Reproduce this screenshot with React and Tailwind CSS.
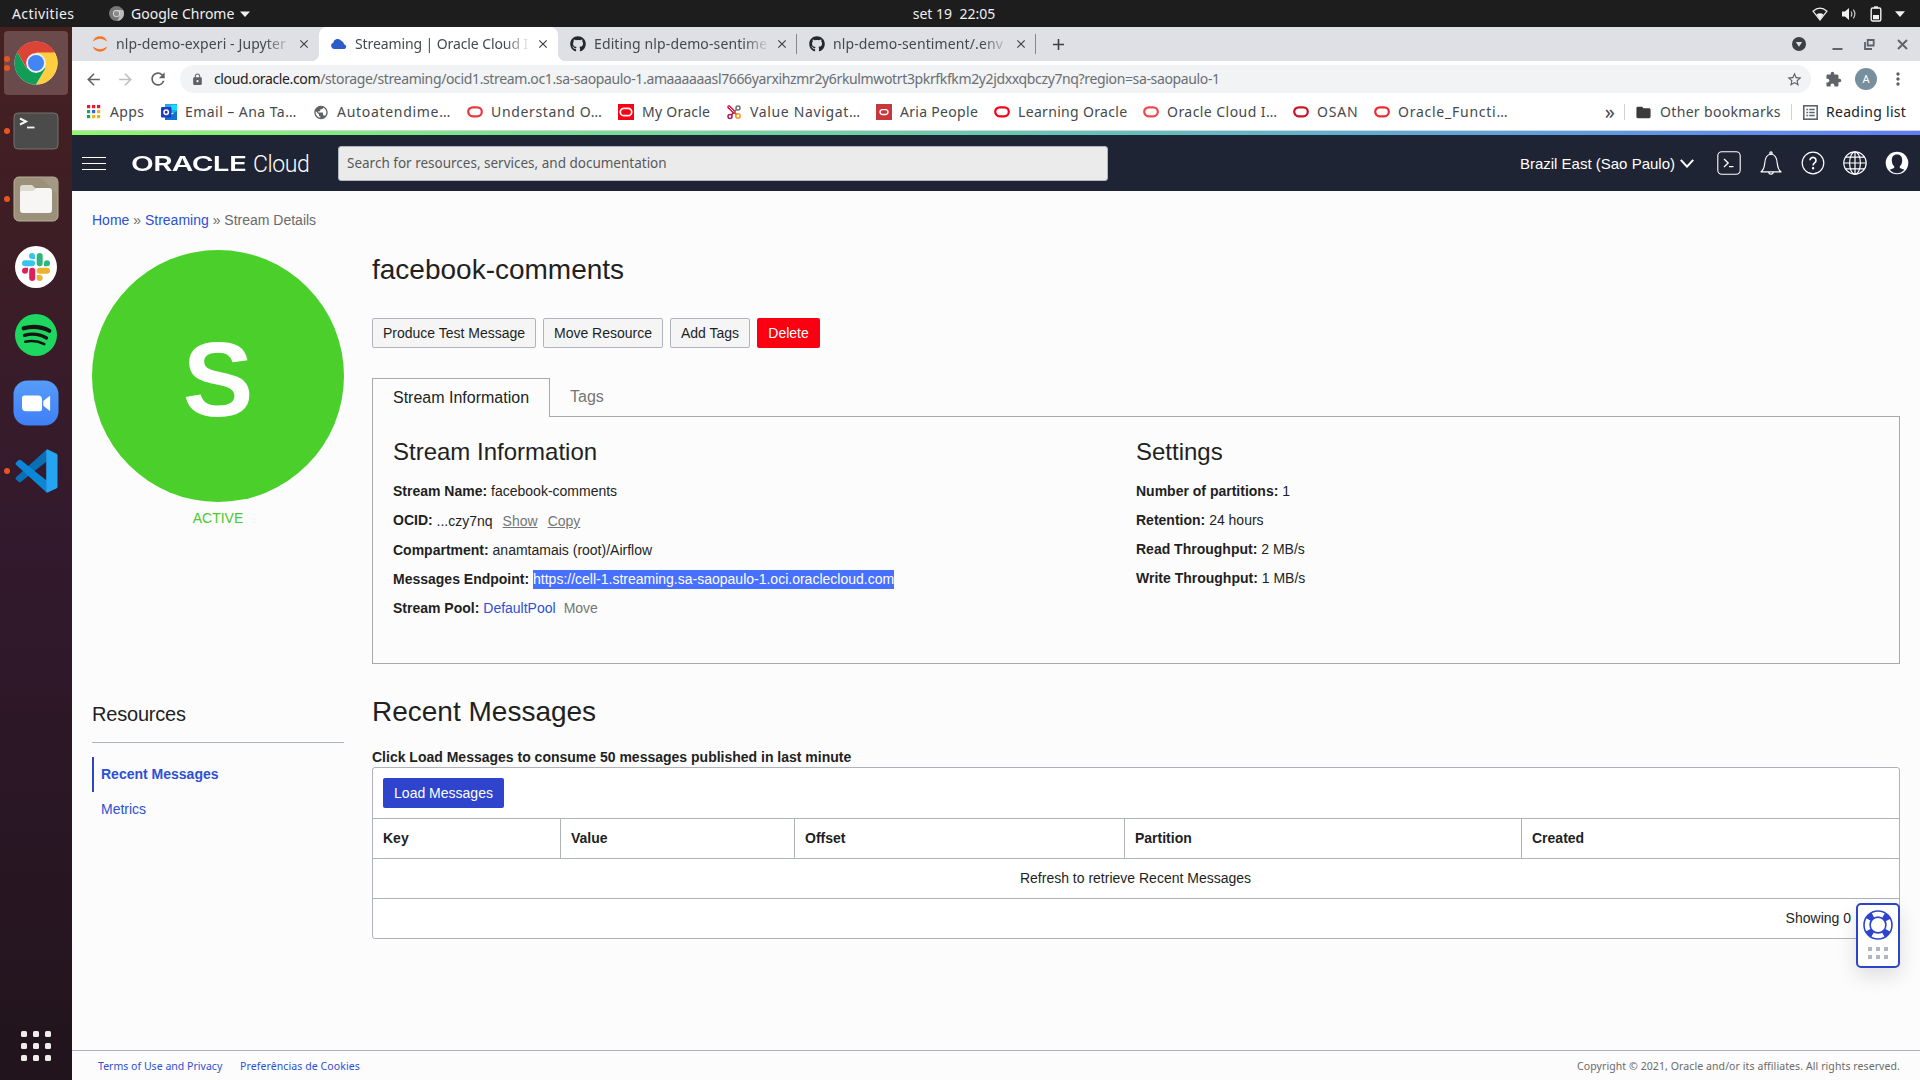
import React from "react";
import { FaGithub } from "react-icons/fa";
import {
  MdArrowBack, MdArrowForward, MdRefresh, MdLock, MdStarBorder, MdExtension,
  MdMoreVert, MdClose, MdAdd, MdPublic, MdFolder,
} from "react-icons/md";

const UI = "font-['Noto_Sans','Open_Sans',sans-serif]";

/* ---------- Dock ---------- */

function ChromeLogo() {
  return (
    <svg width="44" height="44" viewBox="0 0 48 48">
      <circle cx="24" cy="24" r="23.5" fill="#fff" />
      <path d="M24 24 L3.65 12.25 A23.5 23.5 0 0 1 44.35 12.25 Z" fill="#db4437" />
      <path d="M24 12.2 H44.3 A23.5 23.5 0 0 1 24 47.5 L34.2 29.9 Z" fill="#ffcd40" />
      <path d="M13.8 29.9 L3.65 12.25 A23.5 23.5 0 0 0 24 47.5 L34.2 29.9 L24 24 Z" fill="#0f9d58" />
      <path d="M24 12.2 H44.35 A23.5 23.5 0 0 0 3.65 12.25 L13.8 29.9 Z" fill="#db4437" />
      <circle cx="24" cy="24" r="10.8" fill="#f1f1f1" />
      <circle cx="24" cy="24" r="8.8" fill="#4285f4" />
    </svg>
  );
}

function TerminalLogo() {
  return (
    <svg width="46" height="38" viewBox="0 0 46 38">
      <rect x="1" y="1" width="44" height="36" rx="4" fill="#4b4b4b" stroke="#77736f" />
      <path d="M7 6.5 l6 3 l-6 3" fill="none" stroke="#f4f4f4" strokeWidth="2" />
      <path d="M14 15.5 h7.5" stroke="#f4f4f4" strokeWidth="1.8" />
    </svg>
  );
}

function FilesLogo() {
  return (
    <svg width="46" height="46" viewBox="0 0 46 46">
      <rect x="1" y="1" width="44" height="44" rx="5" fill="#9b9079" stroke="#b9b197" />
      <path d="M28 1 H41 a4 4 0 0 1 4 4 V20 Z" fill="#a49a84" />
      <path d="M7 12 a3 3 0 0 1 3-3 h9 l4 4 v7 H7z" fill="#dedbcf" />
      <path d="M7 17 q0-2 2-2 h11 l3-3 h13 a3 3 0 0 1 3 3 v19 a3 3 0 0 1-3 3 H10 a3 3 0 0 1-3-3z" fill="#f7f6f5" />
    </svg>
  );
}

function SlackLogo() {
  return (
    <svg width="42" height="42" viewBox="0 0 42 42">
      <circle cx="21" cy="21" r="21" fill="#fff" />
      <g fill="#36c5f0"><rect x="7" y="14.3" width="13" height="6" rx="3" /><path d="M20 13 h-3 a3 3 0 1 1 3-3z" /></g>
      <g fill="#2eb67d"><rect x="21.7" y="7" width="6" height="13.3" rx="3" /><path d="M29 20.3 v-3 a3 3 0 1 1 3 3z" /></g>
      <g fill="#ecb22e"><rect x="21.7" y="21.8" width="13.3" height="6" rx="3" /><path d="M21.7 29 h3 a3 3 0 1 1 -3 3z" /></g>
      <g fill="#e01e5a"><rect x="14.2" y="21.8" width="6" height="13.3" rx="3" /><path d="M13 21.8 v3 a3 3 0 1 1 -3-3z" /></g>
    </svg>
  );
}

function SpotifyLogo() {
  return (
    <svg width="42" height="42" viewBox="0 0 42 42">
      <circle cx="21" cy="21" r="21" fill="#1ed760" />
      <g fill="none" stroke="#191414" strokeLinecap="round">
        <path d="M8.7 14.3 Q22.5 10.5 34.3 16.8" strokeWidth="4.1" />
        <path d="M9.5 21.3 Q21.5 18 31.5 24" strokeWidth="3.3" />
        <path d="M10.3 27.8 Q20.5 25.3 29.3 30.2" strokeWidth="2.6" />
      </g>
    </svg>
  );
}

function ZoomLogo() {
  return (
    <svg width="46" height="46" viewBox="0 0 46 46">
      <defs>
        <linearGradient id="zoomBlue" x1="0" y1="0" x2="0" y2="1">
          <stop offset="0" stopColor="#569cf9" />
          <stop offset="1" stopColor="#3f7ff6" />
        </linearGradient>
      </defs>
      <rect x="0.5" y="0.5" width="45" height="45" rx="14" fill="url(#zoomBlue)" />
      <path d="M9 18 a2.5 2.5 0 0 1 2.5-2.5 H25 a4 4 0 0 1 4 4 V29 a2.3 2.3 0 0 1-2.3 2.3 H13 a4 4 0 0 1-4-4z" fill="#fff" />
      <path d="M30.3 21 l6-4.8 q.8-.5.8.5 v13.4 q0 1-.8.5 l-6-4.8z" fill="#fff" />
    </svg>
  );
}

function VsCodeLogo() {
  return (
    <svg width="43" height="44" viewBox="0 0 43 44">
      <path d="M31.6 0.6 L1 28.3 q-1 1 0 2.2 l2.8 2.4 q1 .8 2 0 L31.6 12.4z" fill="#0a6fb5" />
      <path d="M31.6 43.4 L1 15.700 q-1-1 0-2.200 l2.800-2.400 q1-.8 2 0 L31.6 31.6z" fill="#0c86d6" />
      <path d="M31.2 1 q.6-.8 1.600-.4 L41.600 4.800 q.9.500.9 1.500 V37.700 q0 1-.9 1.500 L32.800 43.400 q-1 .4-1.600-.4z" fill="#25a5f1" />
    </svg>
  );
}

const dockItems = [
  { name: "Chrome", Logo: ChromeLogo, dots: 2, active: true },
  { name: "Terminal", Logo: TerminalLogo, dots: 1 },
  { name: "Files", Logo: FilesLogo, dots: 1 },
  { name: "Slack", Logo: SlackLogo, dots: 0 },
  { name: "Spotify", Logo: SpotifyLogo, dots: 0 },
  { name: "Zoom", Logo: ZoomLogo, dots: 0 },
  { name: "VS Code", Logo: VsCodeLogo, dots: 1 },
];

function Dock() {
  return (
    <aside className="flex w-[72px] shrink-0 flex-col items-center justify-between bg-linear-to-b from-[#45201f] via-[#32192d] to-[#21141c] pt-1 pb-[19px]">
      <div className="flex flex-col gap-1">
        {dockItems.map(({ name, Logo, dots, active }) => (
          <div key={name} className={`relative flex h-16 w-16 items-center justify-center rounded ${active ? "bg-[#6a4a4a]" : ""}`}>
            <Logo />
            <div className="absolute inset-y-0 left-0 flex flex-col justify-center gap-[3px]">
              {Array.from({ length: dots }, (_, i) => (
                <span key={i} className="block size-1.5 rounded-full bg-[#e95420]" />
              ))}
            </div>
          </div>
        ))}
      </div>
      <div className="grid grid-cols-3 gap-1.5">
        {Array.from({ length: 9 }, (_, i) => (
          <span key={i} className="size-1.5 rounded-[1.5px] bg-[#f0eeeb]" />
        ))}
      </div>
    </aside>
  );
}

/* ---------- Desktop bar ---------- */

function TopBar() {
  return (
    <header className={`flex h-[27px] items-center bg-[#1d1d1d] text-[14px] leading-none text-[#f0f0f0] ${UI}`}>
      <div className="flex flex-1 items-center">
        <span className="ml-3 w-[97px] tracking-[0.4px]">Activities</span>
        <svg width="15" height="15" viewBox="0 0 16 16">
          <circle cx="8" cy="8" r="8" fill="#777" />
          <path d="M8 4.2 H15 A8 8 0 0 1 9 16 L11.5 10z" fill="#bbb" />
          <circle cx="8" cy="8" r="3.8" fill="#ddd" />
          <circle cx="8" cy="8" r="2.8" fill="#8a8a8a" />
        </svg>
        <span className="ml-[7px] w-[109px] whitespace-nowrap">Google Chrome</span>
        <svg width="10" height="6" viewBox="0 0 10 6"><path d="M0 0.5h10L5 6z" fill="#f0f0f0" /></svg>
      </div>
      <span className="whitespace-pre pl-[3px] tracking-[0.02px]">set 19  22:05</span>
      <div className="flex flex-1 items-center justify-end gap-[13px] pr-[15px]">
        <svg width="16" height="14" viewBox="0 0 16 14">
          <path d="M1 4.2 Q8 -1.8 15 4.2 L8 13z" fill="none" stroke="#f0f0f0" strokeWidth="1.2" />
          <path d="M4.5 7.3 Q8 5.2 11.5 7.3 L8 13z" fill="#f0f0f0" />
        </svg>
        <svg width="16" height="14" viewBox="0 0 16 14">
          <path d="M1 4.5h3L8 1v12L4 9.5H1z" fill="#f0f0f0" />
          <path d="M10 4.5q1.8 2.5 0 5M12.3 2.7q3.2 4.3 0 8.6" fill="none" stroke="#c8c8c8" strokeWidth="1.2" />
        </svg>
        <svg width="12" height="16" viewBox="0 0 12 16">
          <rect x="1.2" y="2" width="9.6" height="13" rx="1.5" fill="none" stroke="#f0f0f0" strokeWidth="1.4" />
          <rect x="4" y="0.3" width="4" height="2" fill="#f0f0f0" />
          <rect x="3" y="9" width="6" height="4.3" fill="#f0f0f0" />
        </svg>
        <svg width="10" height="6" viewBox="0 0 10 6"><path d="M0 0.3h10L5 6z" fill="#f0f0f0" /></svg>
      </div>
    </header>
  );
}

/* ---------- Browser chrome ---------- */

const JupyterIcon = () => (
  <svg width="16" height="16" viewBox="0 0 16 16" fill="#f37726">
    <path d="M0.8 5.5 A7.6 7.6 0 0 1 15.2 5.5 Q8 0.2 0.8 5.5z" />
    <path d="M0.8 10.5 A7.6 7.6 0 0 0 15.2 10.5 Q8 15.8 0.8 10.5z" />
  </svg>
);

const CloudIcon = () => (
  <svg width="16" height="16" viewBox="0 0 16 16">
    <path d="M3.2 13 A3.2 3.2 0 0 1 2.2 6.8 A4.6 4.6 0 0 1 10.5 4.9 A3.6 3.6 0 0 1 13 8.2 A2.5 2.5 0 0 1 13.6 13z" fill="#2c5cc5" />
  </svg>
);

const tabs = [
  { icon: <JupyterIcon />, label: "nlp-demo-experi - Jupyter", tracking: "tracking-[0.1px]" },
  { icon: <CloudIcon />, label: "Streaming | Oracle Cloud I", active: true, tracking: "tracking-[-0.1px]" },
  { icon: <FaGithub size={16} color="#24292e" />, label: "Editing nlp-demo-sentime", tracking: "tracking-[0.12px]", divider: true },
  { icon: <FaGithub size={16} color="#24292e" />, label: "nlp-demo-sentiment/.env", tracking: "tracking-[0.12px]", divider: true },
];

function TabStrip() {
  return (
    <div className="flex h-[34px] items-center bg-[#dee0e5] pl-2">
      {tabs.map((t, i) => (
        <div
          key={i}
          className={`relative flex h-full w-[239px] items-center pl-3 ${t.active ? "rounded-t-lg bg-white" : ""}`}
        >
          <span className="shrink-0">{t.icon}</span>
          <span className={`ml-2 w-[176px] shrink-0 whitespace-nowrap pb-0.5 text-[14px] text-[#45494d] mask-r-from-85% mask-r-to-100% ${t.tracking}`}>
            {t.label}
          </span>
          <MdClose className="ml-[5px] shrink-0" size={14} color="#3c4043" />
          {t.divider && <span className="absolute right-0 h-5 w-px bg-[#85888d]" />}
          {t.active && (
            <>
              <span className="absolute bottom-0 -left-2 size-2 bg-[radial-gradient(circle_at_0_0,#dee0e5_8px,#fff_8.5px)]" />
              <span className="absolute -right-2 bottom-0 size-2 bg-[radial-gradient(circle_at_100%_0,#dee0e5_8px,#fff_8.5px)]" />
            </>
          )}
        </div>
      ))}
      <MdAdd className="ml-[13px]" size={19} color="#3c4043" />
      <div className="ml-auto flex items-center pr-[12px]">
        <svg width="14" height="14" viewBox="0 0 14 14"><circle cx="7" cy="7" r="7" fill="#3c4043" /><path d="M3.8 5h6.4L7 9.8z" fill="#dee0e5" /></svg>
        <svg className="ml-[26px]" width="11" height="12" viewBox="0 0 11 12"><path d="M0.5 11h10" stroke="#5f6368" strokeWidth="2" /></svg>
        <svg className="ml-[21px]" width="11" height="11" viewBox="0 0 11 11" fill="none" stroke="#5f6368" strokeWidth="1.8"><path d="M3.7 1h6v5.5h-6z" /><path d="M1 3v7h7" /></svg>
        <svg className="ml-[22px]" width="11" height="11" viewBox="0 0 11 11" stroke="#5f6368" strokeWidth="1.9"><path d="M1 1l9 9M10 1l-9 9" /></svg>
      </div>
    </div>
  );
}

function Toolbar() {
  return (
    <div className="flex h-9 items-center bg-white pl-[12px]">
      <MdArrowBack size={19} color="#5f6368" />
      <MdArrowForward className="ml-[13px]" size={19} color="#bdbfc2" />
      <MdRefresh className="ml-[13px]" size={20} color="#5f6368" />
      <div className="ml-3 flex h-7 w-[1631px] items-center rounded-full bg-[#f1f3f4] pl-[11px]">
        <MdLock size={13} color="#5f6368" />
        <span className="ml-[10px] whitespace-nowrap pb-0.5 text-[14px] tracking-[-0.36px] text-[#6a6e73]">
          <span className="text-[#202124]">cloud.oracle.com</span>
          /storage/streaming/ocid1.stream.oc1.sa-saopaulo-1.amaaaaaasl7666yarxihzmr2y6rkulmwotrt3pkrfkfkm2y2jdxxqbczy7nq?region=sa-saopaulo-1
        </span>
        <MdStarBorder className="mr-[8px] ml-auto" size={17} color="#5f6368" />
      </div>
      <MdExtension className="ml-[14px]" size={17} color="#5f6368" />
      <span className="ml-[13px] flex size-[22px] items-center justify-center rounded-full bg-[#78909c] text-[11px] text-white">A</span>
      <MdMoreVert className="ml-[11px]" size={20} color="#5f6368" />
    </div>
  );
}

const OvalIcon = ({ color }) => (
  <svg width="16" height="16" viewBox="0 0 16 16"><rect x="1.2" y="3.3" width="13.6" height="9" rx="4.5" fill="none" stroke={color} strokeWidth="2.2" /></svg>
);

const AppsIcon = () => (
  <svg width="16" height="16" viewBox="0 0 16 16">
    {["#f0142f", "#f0142f", "#f0142f", "#0fa958", "#3d5af1", "#f2b50a", "#0fa958", "#f2b50a", "#f2b50a"].map((c, i) => (
      <rect key={i} x={1 + (i % 3) * 5} y={1 + Math.floor(i / 3) * 5} width="3.2" height="3.2" fill={c} />
    ))}
  </svg>
);

const OutlookIcon = () => (
  <svg width="16" height="16" viewBox="0 0 16 16">
    <rect x="4" y="0" width="12" height="9" fill="#28a8ea" />
    <rect x="10" y="1" width="6" height="5" fill="#14dcff" />
    <path d="M4 16 V8 L10 11 L16 7 V16z" fill="#1070d0" />
    <rect x="0" y="3" width="10.5" height="10.5" rx="1" fill="#1c3fc0" />
    <circle cx="5.200" cy="8.200" r="2.2" fill="none" stroke="#fff" strokeWidth="1.5" />
  </svg>
);

const OracleSquare = ({ bg, small }) => (
  <svg width="16" height="16" viewBox="0 0 16 16">
    <rect width="16" height="16" fill={bg} />
    {small
      ? <rect x="4" y="5.7" width="8" height="4.8" rx="2.4" fill="none" stroke="#fff" strokeWidth="1.3" />
      : <rect x="2.3" y="4.3" width="11.4" height="7.4" rx="3.7" fill="none" stroke="#fff" strokeWidth="1.7" />}
  </svg>
);

const ValueIcon = () => (
  <svg width="16" height="16" viewBox="0 0 16 16" fill="none" strokeWidth="1.5">
    <path d="M3 3 L8 8" stroke="#e3174a" strokeWidth="3.6" strokeLinecap="round" />
    <path d="M3 3 L8 8" stroke="#fff" strokeWidth="1" strokeLinecap="round" />
    <circle cx="12" cy="4" r="2" stroke="#6f6f78" /><path d="M10.5 5.5 L8 8" stroke="#6f6f78" />
    <circle cx="4" cy="12.5" r="2" stroke="#a3195b" /><path d="M5.5 11 L8 8" stroke="#a3195b" />
    <circle cx="12" cy="12" r="2.2" stroke="#f39a1e" /><path d="M10.5 10.5 L8 8" stroke="#e84e1b" />
  </svg>
);

const bookmarks = [
  { icon: <AppsIcon />, label: "Apps", w: "w-[35px] tracking-[0.4px]" },
  { icon: <OutlookIcon />, label: "Email – Ana Ta…", w: "w-[112px] tracking-[0.45px]" },
  { icon: <MdPublic size={17} color="#5f6368" />, label: "Autoatendime…", w: "w-[114px] tracking-[0.7px]" },
  { icon: <OvalIcon color="#e8383f" />, label: "Understand O…", w: "w-[111px] tracking-[0.65px]" },
  { icon: <OracleSquare bg="#fa0013" />, label: "My Oracle", w: "w-[68px] tracking-[0.25px]" },
  { icon: <ValueIcon />, label: "Value Navigat…", w: "w-[110px] tracking-[0.65px]" },
  { icon: <OracleSquare bg="#c7383d" small />, label: "Aria People", w: "w-[78px] tracking-[0.3px]" },
  { icon: <OvalIcon color="#f80016" />, label: "Learning Oracle", w: "w-[109px] tracking-[0.33px]" },
  { icon: <OvalIcon color="#f1474d" />, label: "Oracle Cloud I…", w: "w-[110px] tracking-[0.45px]" },
  { icon: <OvalIcon color="#cc1426" />, label: "OSAN", w: "w-[41px] tracking-[0.8px]" },
  { icon: <OvalIcon color="#ee2b32" />, label: "Oracle_Functi…", w: "w-[110px] tracking-[0.75px]" },
];

function Bookmarks() {
  return (
    <div className="flex h-[34px] items-center border-b border-[#d5d6da] bg-white pr-3.5 pb-[3px] pl-[14px] text-[14px] text-[#45494d]">
      <div className="flex items-center gap-4">
        {bookmarks.map((b) => (
          <div key={b.label} className="flex items-center gap-2">
            <span className="flex size-4 shrink-0 items-center justify-center">{b.icon}</span>
            <span className={`whitespace-nowrap pb-0.5 ${b.w}`}>{b.label}</span>
          </div>
        ))}
      </div>
      <span className="mr-[-1px] ml-auto text-[20px] leading-none">»</span>
      <span className="ml-2.5 h-4 w-px bg-[#cfd1d4]" />
      <MdFolder className="ml-2.5" size={17} color="#3b3b3b" />
      <span className="ml-2 w-[121px] whitespace-nowrap pb-0.5 tracking-[0.33px]">Other bookmarks</span>
      <span className="ml-2.5 h-4 w-px bg-[#cfd1d4]" />
      <svg className="ml-[11px]" width="15" height="15" viewBox="0 0 15 15" fill="none" stroke="#5f6368">
        <rect x="0.8" y="0.8" width="13.4" height="13.4" strokeWidth="1.6" />
        <path d="M3.4 4.5h1.8M3.4 7.5h1.8M3.4 10.5h1.8M6.3 4.5h5.4M6.3 7.5h5.4M6.3 10.5h5.4" strokeWidth="1.5" />
      </svg>
      <span className="ml-2 w-[80px] whitespace-nowrap pb-0.5 tracking-[0.3px] text-[#202124]">Reading list</span>
    </div>
  );
}

/* ---------- Console ---------- */

function ConsoleHeader() {
  return (
    <>
      <div className="h-1 bg-linear-to-r from-[#8cf964] via-[#68c7ad] to-[#5f7cf9]" />
      <div className="flex h-14 items-center bg-[#1e2433] pl-[10px] text-white">
        <div className="flex w-6 flex-col gap-[5px]">
          <span className="h-px bg-white" />
          <span className="h-px bg-white" />
          <span className="h-px bg-white" />
        </div>
        <div className="ml-[25px] flex w-[207px] items-center pt-0.5 leading-none">
          <span className="w-[122px] origin-left scale-x-[1.48] font-['Inter',sans-serif] text-[20px] font-semibold tracking-[-0.4px]">ORACLE</span>
          <span className="font-['Roboto',sans-serif] text-[23px] font-light tracking-[-0.4px]">Cloud</span>
        </div>
        <div className={`flex h-[35px] w-[770px] items-center rounded-[3px] border border-[#b0b5c2] bg-[#ebebeb] pt-px pl-2 text-[13.5px] text-[#58595b] ${UI}`}>
          Search for resources, services, and documentation
        </div>
        <div className="ml-auto flex items-center pr-[11px]">
          <span className="pt-0.5 text-[15px]">Brazil East (Sao Paulo)</span>
          <svg className="ml-[5px]" width="14" height="9" viewBox="0 0 14 9"><path d="M0.8 0.8 L7 7.6 L13.2 0.8" fill="none" stroke="#fff" strokeWidth="2" /></svg>
          <svg className="ml-[23px]" width="24" height="24" viewBox="0 0 24 24" fill="none" stroke="#fff" strokeWidth="1.1">
            <rect x="0.8" y="0.8" width="22.4" height="22.4" rx="4" />
            <path d="M7 8 l4.2 4 L7 16 M12 15.6 h4.5" strokeWidth="1.3" />
          </svg>
          <svg className="ml-[18px]" width="24" height="24" viewBox="0 0 24 24" fill="none" stroke="#fff" strokeWidth="1.2">
            <path d="M2 20.8 Q5.2 18.5 5.7 12.5 Q6.2 3.8 12 3 Q17.8 3.8 18.3 12.5 Q18.8 18.5 22 20.8z" strokeLinejoin="round" />
            <path d="M9.8 21 a2.2 2.2 0 0 0 4.4 0" /><circle cx="12" cy="2" r="1.2" />
          </svg>
          <svg className="ml-[18px]" width="24" height="24" viewBox="0 0 24 24" fill="none" stroke="#fff" strokeWidth="1.2">
            <circle cx="12" cy="12" r="10.8" />
            <path d="M9 9.3 a3 3 0 1 1 4.6 2.6 Q12.1 12.9 12.1 14.6" strokeWidth="1.6" />
            <circle cx="12.1" cy="17.2" r="0.6" fill="#fff" />
          </svg>
          <svg className="ml-[18px]" width="24" height="24" viewBox="0 0 24 24" fill="none" stroke="#fff" strokeWidth="1.2">
            <circle cx="12" cy="12" r="11.2" />
            <ellipse cx="12" cy="12" rx="5.4" ry="11.2" />
            <path d="M12 1v22M1 12h22M2.6 6.2h18.8M2.6 17.8h18.8" />
          </svg>
          <svg className="ml-[18px]" width="24" height="24" viewBox="0 0 24 24">
            <circle cx="12" cy="12" r="11.3" fill="#fff" />
            <path d="M12 3.6 c3.8 0 5.2 2.6 5.2 5.8 c0 2.5-1 4.6-2.4 5.9 v1.6 l4.600 1.900 Q16 22.300 12 22.300 Q8 22.300 4.600 18.800 l4.600-1.900 v-1.600 C7.8 14 6.8 11.9 6.8 9.4 c0-3.2 1.4-5.8 5.2-5.8z" fill="#1e2433" />
          </svg>
        </div>
      </div>
    </>
  );
}

const Button = ({ children, kind = "default", className = "" }) => {
  const kinds = {
    default: "border border-[#b0b5bd] bg-[#f5f5f5] text-[#221f1f]",
    danger: "bg-[#fa0010] text-white",
    primary: "bg-[#2e44cc] text-white",
  };
  return (
    <button className={`flex h-[30px] items-center justify-center whitespace-nowrap rounded-[2px] text-[14px] ${kinds[kind]} ${className}`}>
      {children}
    </button>
  );
};

const Field = ({ label, children, h = "h-[29px]" }) => (
  <div className={`whitespace-nowrap ${h}`}>
    <b>{label}:</b> {children}
  </div>
);

const columns = [
  { label: "Key", w: "w-[188px]" },
  { label: "Value", w: "w-[234px]" },
  { label: "Offset", w: "w-[330px]" },
  { label: "Partition", w: "w-[397px]" },
  { label: "Created", w: "flex-1" },
];

function StreamPanel() {
  return (
    <section className="mt-[30px]">
      <div className="flex h-[38px] text-[16px]">
        <div className="z-10 -mb-px flex w-[178px] justify-center border border-b-0 border-[#a9a9a9] bg-[#fcfcfc] pt-[7px]">Stream Information</div>
        <div className="pt-[7px] pl-5 text-[#757575]">Tags</div>
      </div>
      <div className="flex h-[248px] border border-[#a9a9a9] px-5 pt-[17px]">
        <div className="w-[743px]">
          <h2 className="mb-[11px] text-[24px] leading-9">Stream Information</h2>
          <Field label="Stream Name">facebook-comments</Field>
          <Field label="OCID" h="h-[30px]">
            <span className="relative top-px">...czy7nq<u className="ml-2.5 text-[#757575]">Show</u><u className="ml-2.5 text-[#757575]">Copy</u></span>
          </Field>
          <Field label="Compartment">anamtamais (root)/Airflow</Field>
          <Field label="Messages Endpoint">
            <span className="bg-[#4870ff] pt-px pb-0.5 text-white">https://cell-1.streaming.sa-saopaulo-1.oci.oraclecloud.com</span>
          </Field>
          <Field label="Stream Pool">
            <span className="text-[#2d50d6]">DefaultPool</span><span className="ml-2 text-[#757575]">Move</span>
          </Field>
        </div>
        <div>
          <h2 className="mb-[11px] text-[24px] leading-9">Settings</h2>
          <Field label="Number of partitions">1</Field>
          <Field label="Retention">24 hours</Field>
          <Field label="Read Throughput">2 MB/s</Field>
          <Field label="Write Throughput">1 MB/s</Field>
        </div>
      </div>
    </section>
  );
}

function HelpWidget() {
  return (
    <div className="absolute top-[135px] -right-px flex h-[65px] w-11 flex-col items-center rounded-[5px] border-2 border-[#2e44cc] bg-white pt-[5px] shadow-[0_8px_20px_rgba(0,0,0,0.12)]">
      <svg width="30" height="30" viewBox="0 0 30 30" fill="none" stroke="#2e44cc">
        <circle cx="15" cy="15" r="14" strokeWidth="1.6" />
        <circle cx="15" cy="15" r="7.9" strokeWidth="1.6" />
        <circle cx="15" cy="15" r="11" strokeWidth="6" strokeDasharray="6.2 11.08" strokeDashoffset="-5.5" />
      </svg>
      <div className="mt-[7px] grid grid-cols-3 gap-1">
        {Array.from({ length: 6 }, (_, i) => <span key={i} className="size-1 bg-[#b0b5c4]" />)}
      </div>
    </div>
  );
}

function MessagesTable() {
  return (
    <div className="relative rounded-[3px] border border-[#adb2bb] bg-white">
      <div className="flex h-[50px] items-center pl-2.5">
        <Button kind="primary" className="w-[121px]">Load Messages</Button>
      </div>
      <div className="flex h-[41px] border-y border-[#adb2bb] font-bold">
        {columns.map((c) => (
          <div key={c.label} className={`flex items-center border-r border-[#adb2bb] pl-2.5 last:border-r-0 ${c.w}`}>{c.label}</div>
        ))}
      </div>
      <div className="flex h-10 items-center justify-center border-b border-[#adb2bb] pr-px">Refresh to retrieve Recent Messages</div>
      <div className="flex h-[39px] items-center justify-end pr-12">Showing 0</div>
      <HelpWidget />
    </div>
  );
}

function Console() {
  return (
    <main className="flex flex-1 flex-col bg-[#fcfcfc] font-['Liberation_Sans',Arial,sans-serif] text-[14px] text-[#221f1f]">
      <ConsoleHeader />
      <div className="flex-1 px-5 pt-[18px]">
        <nav className="leading-[22px] text-[#6b6a69]">
          <span className="text-[#2d50d6]">Home</span> » <span className="text-[#2d50d6]">Streaming</span> » Stream Details
        </nav>
        <div className="mt-[19px] flex gap-7">
          <div className="w-[252px] shrink-0">
            <div className="flex size-[252px] items-center justify-center rounded-full bg-[#4bd02b] pt-[5px] text-[106px] font-bold leading-none text-white">S</div>
            <div className="mt-1.5 text-center text-[#4bc930]">ACTIVE</div>
            <h3 className="mt-[172px] h-[42px] border-b border-[#adb5c0] text-[20px] leading-[26px] tracking-[-0.2px]">Resources</h3>
            <div className="mt-[14px] flex h-[35px] items-center border-l-2 border-[#2e44cc] pl-[7px] font-bold text-[#2d50d6]">Recent Messages</div>
            <div className="flex h-[35px] items-center pl-[9px] text-[#2d50d6]">Metrics</div>
          </div>
          <div className="min-w-0 flex-1">
            <h1 className="text-[28px] leading-10">facebook-comments</h1>
            <div className="mt-7 flex gap-[7px]">
              <Button className="w-[164px]">Produce Test Message</Button>
              <Button className="w-[120px]">Move Resource</Button>
              <Button className="w-[80px]">Add Tags</Button>
              <Button kind="danger" className="w-[63px]">Delete</Button>
            </div>
            <StreamPanel />
            <h1 className="mt-[28px] text-[28px] leading-10">Recent Messages</h1>
            <p className="mt-[15px] font-bold leading-5">Click Load Messages to consume 50 messages published in last minute</p>
            <MessagesTable />
          </div>
        </div>
      </div>
      <footer className={`flex h-[30px] items-center border-t border-[#adb2bb] pt-0.5 pr-5 pl-[26px] text-[10.5px] ${UI}`}>
        <span className="w-[142px] whitespace-nowrap tracking-[0.03px] text-[#2d50d6]">Terms of Use and Privacy</span>
        <span className="tracking-[0.1px] text-[#2d50d6]">Preferências de Cookies</span>
        <span className="ml-auto tracking-[0.09px] text-[#6b6a69]">Copyright © 2021, Oracle and/or its affiliates. All rights reserved.</span>
      </footer>
    </main>
  );
}

export default function App() {
  return (
    <div className="flex h-[1080px] w-[1920px] flex-col overflow-hidden">
      <TopBar />
      <div className="flex min-h-0 flex-1">
        <Dock />
        <div className="flex min-w-0 flex-1 flex-col">
          <div className={UI}>
            <TabStrip />
            <Toolbar />
            <Bookmarks />
          </div>
          <Console />
        </div>
      </div>
    </div>
  );
}
